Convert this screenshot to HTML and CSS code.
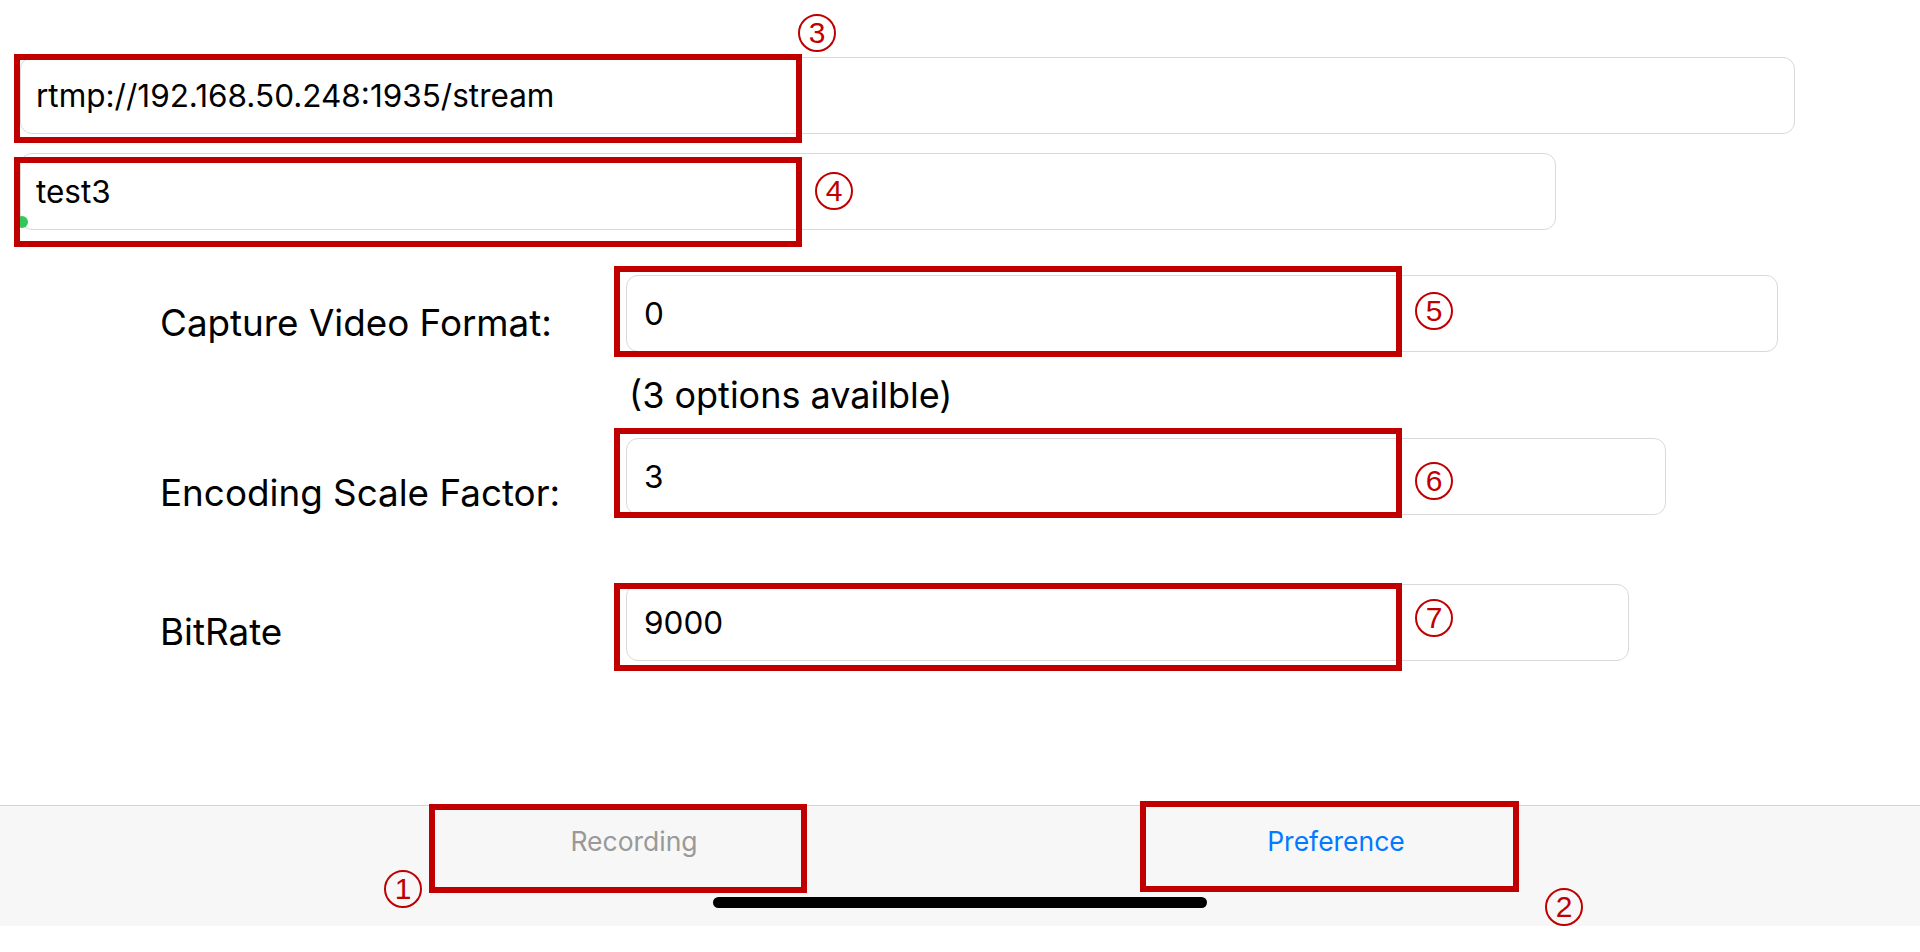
FILE: index.html
```html
<!DOCTYPE html>
<html lang="en">
<head>
<meta charset="utf-8">
<title>Preference</title>
<link rel="stylesheet" href="styles.css">
</head>
<body>
<div class="screen">
  <main class="content">
    <div class="field url">
      <div class="input">rtmp://192.168.50.248:1935/stream</div>
      <span class="mark mark-url"></span>
      <span class="num num-url">3</span>
    </div>
    <div class="field stream">
      <div class="input">test3</div>
      <span class="dot"></span>
      <span class="mark mark-stream"></span>
      <span class="num num-stream">4</span>
    </div>

    <div class="form">
      <div class="row">
        <div class="label label-format">Capture Video Format:</div>
        <div class="field f-format">
          <div class="input input-sm">0</div>
          <span class="mark mark-format"></span>
          <span class="num num-format">5</span>
        </div>
      </div>
      <div class="hint">(3 options availble)</div>
      <div class="row row-scale">
        <div class="label label-scale">Encoding Scale Factor:</div>
        <div class="field f-scale">
          <div class="input input-sm">3</div>
          <span class="mark mark-scale"></span>
          <span class="num num-scale">6</span>
        </div>
      </div>
      <div class="row row-bitrate">
        <div class="label label-bitrate">BitRate</div>
        <div class="field f-bitrate">
          <div class="input input-sm">9000</div>
          <span class="mark mark-bitrate"></span>
          <span class="num num-bitrate">7</span>
        </div>
      </div>
    </div>
  </main>

  <footer class="tabbar">
    <div class="tabs">
      <div class="tab tab-rec">
        <span class="tab-label">Recording</span>
        <span class="mark mark-rec"></span>
        <span class="num num-rec">1</span>
      </div>
      <div class="tab tab-pref">
        <span class="tab-label">Preference</span>
        <span class="mark mark-pref"></span>
        <span class="num num-pref">2</span>
      </div>
    </div>
    <div class="home"></div>
  </footer>
  <div class="strip"></div>
</div>
</body>
</html>
```

FILE: styles.css
```css
* { box-sizing: border-box; }

html, body {
  margin: 0;
  padding: 0;
  background: #ffffff;
}

body {
  font-family: Inter, "Liberation Sans", Arial, sans-serif;
  color: #000000;
}

.screen {
  width: 1920px;
  height: 952px;
  display: flex;
  flex-direction: column;
  overflow: hidden;
}

.content {
  height: 805px;
  flex-shrink: 0;
  padding-top: 57px;
  display: flex;
  flex-direction: column;
}

.field {
  position: relative;
}

.input {
  height: 77px;
  border: 1px solid #d9d9d9;
  border-radius: 12px;
  background: #ffffff;
  display: flex;
  align-items: center;
  padding-left: 15px;
  font-size: 31.5px;
  line-height: 38px;
  white-space: nowrap;
}

.url {
  margin-left: 20px;
  width: 1775px;
}

.stream {
  margin-left: 20px;
  width: 1536px;
  margin-top: 19px;
}

.form {
  margin-top: 45px;
  margin-left: 160px;
  display: flex;
  flex-direction: column;
}

.row {
  display: flex;
  align-items: flex-start;
}

.label {
  width: 466px;
  flex-shrink: 0;
  font-size: 36.8px;
  line-height: 44px;
  white-space: nowrap;
}

.label-format { padding-top: 26px; }
.label-scale { padding-top: 33px; }
.label-bitrate { padding-top: 26px; }

.input-sm { padding-left: 17px; }

.f-format { width: 1152px; }
.f-scale { width: 1040px; }
.f-bitrate { width: 1003px; }

.hint {
  margin-left: 469px;
  margin-top: 21px;
  font-size: 36px;
  line-height: 44px;
  white-space: nowrap;
}

.row-scale { margin-top: 21px; }
.row-bitrate { margin-top: 69px; }

/* annotation overlays */
.mark {
  position: absolute;
  border: 6px solid #c00000;
  pointer-events: none;
}

.num {
  position: absolute;
  width: 38px;
  height: 38px;
  margin-left: -19px;
  margin-top: -19px;
  border: 2px solid #c00000;
  border-radius: 50%;
  color: #c00000;
  font-family: "Liberation Sans", Arial, sans-serif;
  font-size: 30px;
  font-weight: 400;
  line-height: 1;
  display: flex;
  align-items: center;
  justify-content: center;
}

.dot {
  position: absolute;
  left: -4px;
  top: 63px;
  width: 12px;
  height: 12px;
  border-radius: 50%;
  background: #34c759;
}

.mark-url { left: -6px; top: -3px; width: 788px; height: 89px; }
.num-url { left: 797px; top: -24px; }

.mark-stream { left: -6px; top: 4px; width: 788px; height: 90px; }
.num-stream { left: 814px; top: 38px; }

.mark-format { left: -12px; top: -9px; width: 788px; height: 91px; }
.num-format { left: 808px; top: 36px; }

.mark-scale { left: -12px; top: -10px; width: 788px; height: 90px; }
.num-scale { left: 808px; top: 43px; }

.mark-bitrate { left: -12px; top: -1px; width: 788px; height: 88px; }
.num-bitrate { left: 808px; top: 34px; }

/* tab bar */
.tabbar {
  height: 121px;
  flex-shrink: 0;
  background: #f7f7f7;
  border-top: 1px solid #d4d4d4;
  display: flex;
  flex-direction: column;
}

.tabs {
  height: 91px;
  display: flex;
  padding-left: 283px;
}

.tab {
  position: relative;
  width: 702px;
  padding-top: 18px;
  text-align: center;
  font-size: 26.5px;
  line-height: 34px;
}

.tab-rec .tab-label { color: #999999; }
.tab-pref .tab-label { color: #007aff; }

.mark-rec { left: 146px; top: -2px; width: 378px; height: 89px; }
.num-rec { left: 120px; top: 83px; }

.mark-pref { left: 155px; top: -5px; width: 379px; height: 91px; }
.num-pref { left: 579px; top: 101px; }

.home {
  align-self: center;
  width: 494px;
  height: 11px;
  border-radius: 6px;
  background: #000000;
}

.strip {
  flex: 1;
  background: #ffffff;
}
```
